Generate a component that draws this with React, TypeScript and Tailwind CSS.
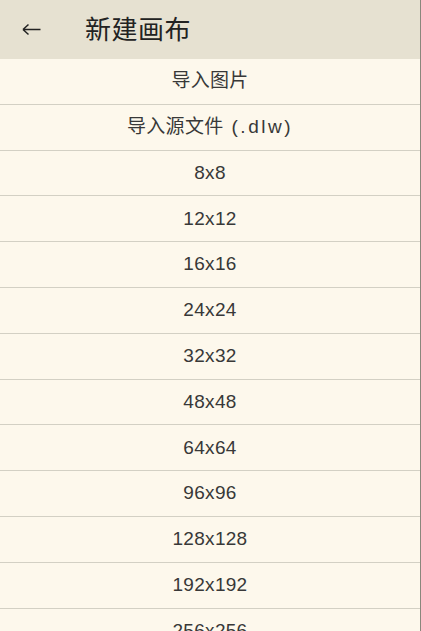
import React from "react";

const items: React.ReactNode[] = [
  "导入图片",
  <>
    导入源文件<span className="ml-[8px] tracking-[2.5px]">(.dlw)</span>
  </>,
  "8x8",
  "12x12",
  "16x16",
  "24x24",
  "32x32",
  "48x48",
  "64x64",
  "96x96",
  "128x128",
  "192x192",
  "256x256",
];

export default function App() {
  return (
    <div
      className="w-[421px] h-[631px] overflow-hidden flex flex-col bg-[#fdf8ec] border-r border-[#8a877c]"
      style={{ fontFamily: '"Liberation Sans", "Noto Sans CJK SC", sans-serif' }}
    >
      <div className="h-[59px] shrink-0 bg-[#e6e1d1] flex items-center">
        <div className="w-[85px] pl-[22px] flex items-center">
          <svg width="19" height="13" viewBox="0 0 19 13" className="text-[#222]">
            <path d="M1 6.5 H18.5 M1 6.5 L6.5 1.5 M1 6.5 L6.5 11.5" stroke="currentColor" strokeWidth="1.5" fill="none" />
          </svg>
        </div>
        <div className="text-[26px] text-[#222] leading-none tracking-[0.5px]">新建画布</div>
      </div>
      <div className="flex flex-col">
        {items.map((t, i) => (
          <div
            key={i}
            className="h-[45.8px] shrink-0 flex items-center justify-center border-b border-[#d3d0c4] text-[19px] text-[#383838] tracking-[0.3px]"
          >
            {t}
          </div>
        ))}
      </div>
    </div>
  );
}
